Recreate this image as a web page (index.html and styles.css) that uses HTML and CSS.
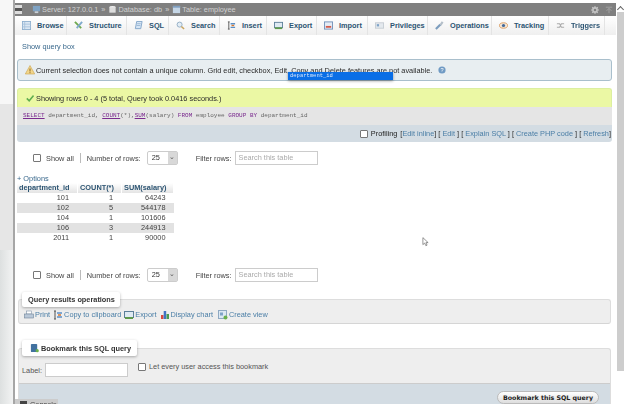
FILE: index.html
```html
<!DOCTYPE html>
<html lang="en">
<head>
<meta charset="utf-8">
<title>phpMyAdmin</title>
<link rel="stylesheet" href="styles.css">
</head>
<body>
<div class="page">
  <div class="strip"><div class="s1"></div><div class="s2"></div><div class="s3"></div></div>
  <div class="main">
    <div class="crumbs">
      <span class="collapse"></span>
      <svg class="ci ci1" viewBox="0 0 10 10"><rect x="1" y="1" width="8" height="6" fill="#7fa3c4"/><rect x="3" y="7" width="4" height="2" fill="#c8d0d8"/></svg>
      <span>Server: 127.0.0.1</span><b class="sep">»</b>
      <svg class="ci" viewBox="0 0 10 10"><ellipse cx="5" cy="2.500" rx="3.500" ry="1.500" fill="#eee"/><rect x="1.500" y="2.500" width="7" height="6" fill="#ddd"/></svg>
      <span>Database: db</span><b class="sep">»</b>
      <svg class="ci" viewBox="0 0 10 10"><rect x="1" y="1" width="8" height="8" fill="#c5d6e6"/><rect x="1" y="1" width="8" height="2" fill="#7f9fc0"/></svg>
      <span>Table: employee</span>
      <span class="crumb-tools">
        <svg class="gear" viewBox="0 0 10 10"><circle cx="5" cy="5" r="2.600" fill="none" stroke="#c4c4c4" stroke-width="2"/><path d="M5 0v2M5 8v2M0 5h2M8 5h2M1.500 1.500l1.400 1.400M7.100 7.100l1.400 1.400M8.500 1.500L7.100 2.900M2.900 7.100L1.500 8.500" stroke="#c4c4c4" stroke-width="1.300"/></svg>
        <svg class="gear" viewBox="0 0 10 10"><path d="M1 1.500h8M2 6l3-3 3 3M5 3v6" fill="none" stroke="#a8a8a8"/></svg>
      </span>
    </div>
    <nav class="tabs">
      <a class="tab t-browse"><svg viewBox="0 0 10 10"><rect x=".5" y=".5" width="9" height="9" fill="#dbe7f3" stroke="#8fb0d0"/><path d="M3 1v8M.5 3.500h9M.5 6.500h9" stroke="#a9c3dc"/></svg>Browse</a>
      <a class="tab t-structure"><svg viewBox="0 0 10 10"><path d="M1 1l7 7" stroke="#6fa94f" stroke-width="2"/><path d="M9 1L3 8" stroke="#7fa9cc" stroke-width="2"/></svg>Structure</a>
      <a class="tab t-sql"><svg viewBox="0 0 10 10"><path d="M3 .5h6l-1.500 8h-6z" fill="#d7e6f5" stroke="#7fa3c7"/><path d="M3.500 3h4M3 5h4" stroke="#7fa3c7" stroke-width=".7"/></svg>SQL</a>
      <a class="tab t-search"><svg viewBox="0 0 10 10"><circle cx="4" cy="4" r="2.800" fill="#e3edf5" stroke="#8eaac2"/><path d="M6 6l3 3" stroke="#c9a45e" stroke-width="1.600"/></svg>Search</a>
      <a class="tab t-insert"><svg viewBox="0 0 10 10"><path d="M2 1v8M1 1h2M1 9h2" stroke="#555"/><path d="M4 3h5M4 7h5" stroke="#5a8fc7" stroke-width="1.500"/><path d="M5 5h3" stroke="#d9772e" stroke-width="1.500"/></svg>Insert</a>
      <a class="tab t-export"><svg viewBox="0 0 10 10"><rect x=".5" y="1.500" width="9" height="6" fill="#dfeaf3" stroke="#5c7f99"/><rect x="1" y="7" width="8" height="2" fill="#5f9a4d"/></svg>Export</a>
      <a class="tab t-import"><svg viewBox="0 0 10 10"><rect x=".5" y="1" width="9" height="8" fill="#e5ecf5" stroke="#6f8fb8"/><rect x="2" y="5.500" width="6" height="2" fill="#d45a4a"/></svg>Import</a>
      <a class="tab t-priv"><svg viewBox="0 0 10 10"><rect x=".5" y="2" width="9" height="6" fill="#e4e9ee" stroke="#c5ccd3"/><rect x="2" y="3.500" width="2.500" height="2.500" fill="#7fa3c7"/></svg>Privileges</a>
      <a class="tab t-ops"><svg viewBox="0 0 10 10"><path d="M1 9l5-5" stroke="#7c9dbe" stroke-width="2.400"/><path d="M6 4.500L8.500 1" stroke="#b5bfc9" stroke-width="2.400"/></svg>Operations</a>
      <a class="tab t-track"><svg viewBox="0 0 10 10"><ellipse cx="5" cy="5" rx="4.500" ry="3" fill="#f4e7d8" stroke="#d99a5c"/><circle cx="5" cy="5" r="1.800" fill="#41699a"/></svg>Tracking</a>
      <a class="tab t-trig"><svg viewBox="0 0 10 10"><path d="M1 3h3l2 4h3M1 7h3l2-4h3" fill="none" stroke="#aaa" stroke-width="1.200"/></svg>Triggers</a>
    </nav>
    <div class="content">
      <a class="show-box">Show query box</a>
      <div class="notice">
        <svg class="warn" viewBox="0 0 10 10"><path d="M5 .5L9.700 9H.3z" fill="#f3d68a" stroke="#c9a24b" stroke-width=".6"/><path d="M5 3.500V6.500M5 7.200v1" stroke="#7a5a1e" stroke-width=".9"/></svg>
        <span>Current selection does not contain a unique column. Grid edit, checkbox, Edit, Copy and Delete features are not available.</span>
        <svg class="help" viewBox="0 0 10 10"><circle cx="5" cy="5" r="4.500" fill="#6f9ac4"/><text x="5" y="7.500" text-anchor="middle" font-size="7" fill="#fff" font-family="Liberation Sans">?</text></svg>
        <span class="sel-pop"><span class="sel-inner">department_id</span></span>
      </div>
      <div class="result">
        <div class="success">
          <svg class="tick" viewBox="0 0 10 10"><path d="M1 5.500l3 3 5.500-6.500" fill="none" stroke="#5fae4f" stroke-width="2"/></svg>
          <span>Showing rows 0 - 4 (5 total, Query took 0.0416 seconds.)</span>
        </div>
        <div class="sql"><u class="kw">SELECT</u> department_id, <u class="kw">COUNT</u>(*),<u class="kw">SUM</u>(salary) <span class="kw">FROM</span> employee <span class="kw">GROUP BY</span> department_id</div>
        <div class="sql-tools">
          <span class="box"></span><span class="prof">Profiling</span>
          <span>[<a>Edit inline</a>] [ <a>Edit</a> ] [ <a>Explain SQL</a> ] [ <a>Create PHP code</a> ] [ <a>Refresh</a>]</span>
        </div>
      </div>
      <div class="pager pager-top">
        <span class="box"></span><span class="all">Show all</span><span class="vbar"></span><span class="num">Number of rows:</span>
        <span class="select"><span>25</span><span class="arrow">⌄</span></span>
        <span class="flt">Filter rows:</span><span class="search">Search this table</span>
      </div>
      <a class="options">+ Options</a>
      <table class="data">
        <thead><tr><th>department_id</th><th>COUNT(*)</th><th>SUM(salary)</th></tr></thead>
        <tbody>
          <tr><td>101</td><td>1</td><td>64243</td></tr>
          <tr class="alt"><td>102</td><td>5</td><td>544178</td></tr>
          <tr><td>104</td><td>1</td><td>101606</td></tr>
          <tr class="alt"><td>106</td><td>3</td><td>244913</td></tr>
          <tr><td>2011</td><td>1</td><td>90000</td></tr>
        </tbody>
      </table>
      <div class="pager pager-bottom">
        <span class="box"></span><span class="all">Show all</span><span class="vbar"></span><span class="num">Number of rows:</span>
        <span class="select"><span>25</span><span class="arrow">⌄</span></span>
        <span class="flt">Filter rows:</span><span class="search">Search this table</span>
      </div>
      <section class="field ops">
        <h3 class="legend">Query results operations</h3>
        <div class="op-links">
          <a><svg viewBox="0 0 10 10"><rect x="2.500" y="1" width="5" height="3" fill="#fff" stroke="#7f93a8" stroke-width=".6"/><rect x=".5" y="4" width="9" height="4" fill="#b9c8d8" stroke="#6f8499" stroke-width=".6"/></svg>Print</a>
          <a><svg viewBox="0 0 10 10"><path d="M2 1v8M1 1h2M1 9h2" stroke="#555"/><path d="M4 3h5M4 7h5" stroke="#5a8fc7" stroke-width="1.500"/><path d="M5 5h3" stroke="#d9772e" stroke-width="1.500"/></svg>Copy to clipboard</a>
          <a><svg viewBox="0 0 10 10"><rect x=".5" y="1.500" width="9" height="6" fill="#dfeaf3" stroke="#5c7f99"/><rect x="1" y="7" width="8" height="2" fill="#5f9a4d"/></svg>Export</a>
          <a><svg viewBox="0 0 10 10"><rect x="1" y="5" width="2.500" height="4" fill="#d8493f"/><rect x="3.700" y="1" width="2.500" height="8" fill="#4174c4"/><rect x="6.500" y="4" width="2.500" height="5" fill="#4a9c52"/></svg>Display chart</a>
          <a class="view"><svg viewBox="0 0 10 10"><rect x=".5" y=".5" width="8" height="8" fill="#dce8f3" stroke="#8fa9c2"/><rect x="2" y="2.500" width="3" height="3" fill="#7fa3c7"/><circle cx="7.500" cy="7.500" r="2" fill="#6ab04c"/></svg>Create view</a>
        </div>
      </section>
      <section class="field mark">
        <h3 class="legend"><svg viewBox="0 0 10 10"><rect x="1" y=".5" width="7" height="9" rx="1" fill="#41719f"/><circle cx="8" cy="8" r="1.800" fill="#6ab04c"/></svg>Bookmark this SQL query</h3>
        <div class="mark-row">
          <label class="lbl">Label:</label><span class="lbl-input"></span>
          <span class="box"></span><span class="every">Let every user access this bookmark</span>
        </div>
        <div class="mark-foot"><button class="btn" type="button">Bookmark this SQL query</button></div>
      </section>
    </div>
    <div class="console"><span class="con-ico"></span>Console</div>
    <svg class="pointer" viewBox="0 0 8 11"><path d="M1 .5v8l2-1.800 1.400 3 1.400-.6-1.300-2.900H7z" fill="#fff" stroke="#555" stroke-width=".7"/></svg>
  </div>
  <div class="scroll"><span class="up"></span><span class="thumb"></span></div>
</div>
</body>
</html>
```
FILE: styles.css
```css
* { box-sizing: border-box; }
html, body { margin: 0; padding: 0; height: 404px; overflow: hidden; background: #fff; }
body { font-family: "Liberation Sans", Arial, sans-serif; font-size: 7.35px; color: #3a3a3a; }
.page { display: flex; width: 624px; height: 404px; filter: blur(0.35px); }
.strip { width: 15px; flex: none; border-right: 2px solid #a6a6a6; display: flex; flex-direction: column; }
.s1 { height: 104px; background: #f7f7f7; }
.s2 { height: 146px; background: #e6e6e6; }
.s3 { flex: 1; background: linear-gradient(90deg, #dde0e0, #f2f3f3); }
.main { width: 601px; flex: none; height: 404px; overflow: hidden; padding-top: 3px; position: relative; }
.scroll { width: 8px; flex: none; background: #fff; display: flex; flex-direction: column; }
.up { height: 12px; flex: none; }
.up::before { content: ""; display: block; width: 4px; height: 4px; margin: 7px 0 0 2px; border-left: 1px solid #666; border-top: 1px solid #666; transform: rotate(45deg); }
.thumb { display: block; margin-left: 1px; width: 7px; height: 359px; background: #cdcdcd; flex: none; }
.pointer { position: absolute; left: 407px; top: 237px; width: 7px; height: 10px; }

.crumbs { height: 13px; background: #808080; color: #d2d2d2; display: flex; align-items: center; padding-left: 0; white-space: nowrap; }
.collapse { width: 7px; height: 9px; margin-right: 10px; flex: none; background: #ddd; border-top: 3px solid #ddd; border-bottom: 3px solid #ddd; background-clip: padding-box; background-color: #555; }
.ci { width: 9px; height: 9px; margin-right: 1px; flex: none; }
.sep { font-weight: normal; margin: 0 3px; }
.crumb-tools { margin-left: auto; display: flex; gap: 6px; padding-right: 3px; }
.gear { width: 8px; height: 8px; }

.tabs { height: 19px; display: flex; background: linear-gradient(#fff, #efefef); }
.tab { display: flex; align-items: center; gap: 6px; font-weight: bold; color: #2c5472; padding-left: 7px; border-right: 1px solid #e4e4e4; white-space: nowrap; }
.tab svg { width: 9px; height: 9px; flex: none; }
.t-browse { width: 52px; }
.t-structure { width: 60px; }
.t-sql { width: 42px; }
.t-search { width: 51px; }
.t-insert { width: 47px; }
.t-export { width: 50px; }
.t-import { width: 51px; }
.t-priv { width: 60px; }
.t-ops { width: 64px; }
.t-track { width: 57px; }
.t-trig { width: 56px; }

.content { padding: 7px 4px 0 2px; }
.show-box { display: block; color: #39688c; margin-left: 5px; line-height: 10px; height: 17px; }
.notice { position: relative; height: 22px; background: #e8eef1; border: 1px solid #a9bfcc; border-radius: 3px; display: flex; align-items: center; padding-left: 7px; color: #2a2a2a; }
.warn { width: 10px; height: 10px; margin-right: 1px; flex: none; }
.help { width: 8px; height: 8px; margin-left: 6px; flex: none; }
.sel-pop { position: absolute; left: 270px; top: 12px; width: 105px; height: 8px; background: #0a6ee6; box-shadow: 0 1px 3px rgba(0,0,0,.4); padding-left: 2px; }
.sel-inner { display: block; font-family: "Liberation Mono", monospace; font-size: 5.500px; line-height: 8px; color: #dbe9fb; }

.result { margin-top: 7px; }
.success { height: 19px; background: #ebf8a4; border: 1px solid #dcefa0; border-bottom: 0; border-radius: 3px 3px 0 0; display: flex; align-items: center; padding-left: 8px; color: #2a2a2a; }
.tick { width: 8px; height: 8px; margin-right: 2px; flex: none; }
.sql { height: 18px; background: #e5e5e5; padding-left: 6px; line-height: 18px; font-family: "Liberation Mono", monospace; font-size: 6px; color: #666; }
.kw { color: #7a2a8e; }
.sql-tools { height: 17px; background: #d3dce3; border-radius: 0 0 3px 3px; display: flex; justify-content: flex-end; align-items: center; gap: 3px; padding-right: 1px; color: #2a2a2a; }
.sql-tools a { color: #4a7ea6; }
.prof { color: #222; }
.box { width: 8px; height: 8px; border: 1px solid #777; border-radius: 1px; background: #fff; flex: none; display: inline-block; }

.pager { display: flex; align-items: center; height: 14px; padding-left: 16px; color: #444; }
.pager-top { margin-top: 9px; }
.pager-bottom { margin-top: 25px; }
.all { margin-left: 5px; }
.vbar { width: 1px; height: 10px; background: #bbb; margin-left: 6px; }
.num { margin-left: 6px; }
.select { width: 31px; height: 14px; margin-left: 6px; border: 1px solid #ccc; border-radius: 2px; display: flex; justify-content: space-between; align-items: stretch; padding-left: 4px; line-height: 12px; color: #333; }
.arrow { width: 9px; background: #d8d8d8; text-align: center; font-size: 7px; color: #555; line-height: 9px; }
.flt { margin-left: 18px; }
.search { width: 83px; height: 14px; margin-left: 3px; border: 1px solid #ccc; padding-left: 3px; line-height: 12px; color: #aaa; }

.options { display: block; color: #39688c; margin-top: 10px; line-height: 8px; height: 8px; }
.data { border-collapse: collapse; width: 157px; table-layout: fixed; line-height: 10px; }
.data th { height: 10px; padding: 0 4px 0 0; font-weight: bold; color: #2c5472; background: linear-gradient(#fff, #e4e4e4); border-right: 1px solid #fff; text-align: center; white-space: nowrap; }
.data th:nth-child(1) { width: 60px; padding-right: 5px; }
.data th:nth-child(2) { width: 44px; }
.data td { height: 10px; padding: 0 8px 0 0; text-align: right; color: #444; }
.alt td { background: #e2e2e2; }

.field { margin-left: 1px; width: 593px; background: #eeeeee; border: 1px solid #ddd; border-bottom: 1px solid #d5d5d5; border-radius: 3px; position: relative; }
.legend { position: absolute; left: 3px; margin: 0; background: #fff; border-radius: 2px; box-shadow: 0 1px 3px rgba(0,0,0,.3); font-size: 7.35px; color: #333; display: flex; align-items: center; padding: 0 6px; white-space: nowrap; }
.ops { height: 25px; margin-top: 17px; }
.ops .legend { top: -8px; width: 98px; height: 15px; }
.op-links { display: flex; gap: 3px; padding: 10px 0 0 5px; }
.op-links a { display: flex; align-items: center; gap: 1px; color: #4a7ea6; line-height: 10px; white-space: nowrap; }
.op-links .view { margin-left: 2px; }
.op-links svg { width: 10px; height: 10px; flex: none; }
.mark { height: 56px; margin-top: 24px; border-bottom: 0; border-radius: 3px 3px 0 0; }
.mark .legend { top: -9px; width: 115px; height: 16px; padding-left: 8px; gap: 2px; }
.legend svg { width: 9px; height: 10px; flex: none; }
.mark-row { height: 35px; display: flex; align-items: flex-start; padding: 14px 0 0 3px; color: #555; border-bottom: 1px solid #ccc; }
.lbl { margin-top: 3px; line-height: 9px; }
.lbl-input { width: 83px; height: 14px; background: #fff; border: 1px solid #ccc; margin-left: 3px; flex: none; }
.mark-row .box { margin-left: 10px; }
.every { margin-left: 3px; line-height: 8px; }
.mark-foot { height: 20px; background: #d3dce3; display: flex; justify-content: flex-end; padding: 7px 11px 0 0; }
.btn { height: 13px; padding: 0; width: 102px; border: 1px solid #bbb; border-radius: 7px; background: linear-gradient(#fff, #ddd); font-family: "DejaVu Sans", sans-serif; font-weight: bold; font-size: 6.3px; color: #222; line-height: 11px; white-space: nowrap; }

.console { position: absolute; left: 0; top: 399px; width: 43px; height: 12px; background: #ccc; padding-left: 15px; line-height: 12px; color: #444; }
.con-ico { position: absolute; left: 5px; top: 2px; width: 7px; height: 5px; background: #444; }
```
